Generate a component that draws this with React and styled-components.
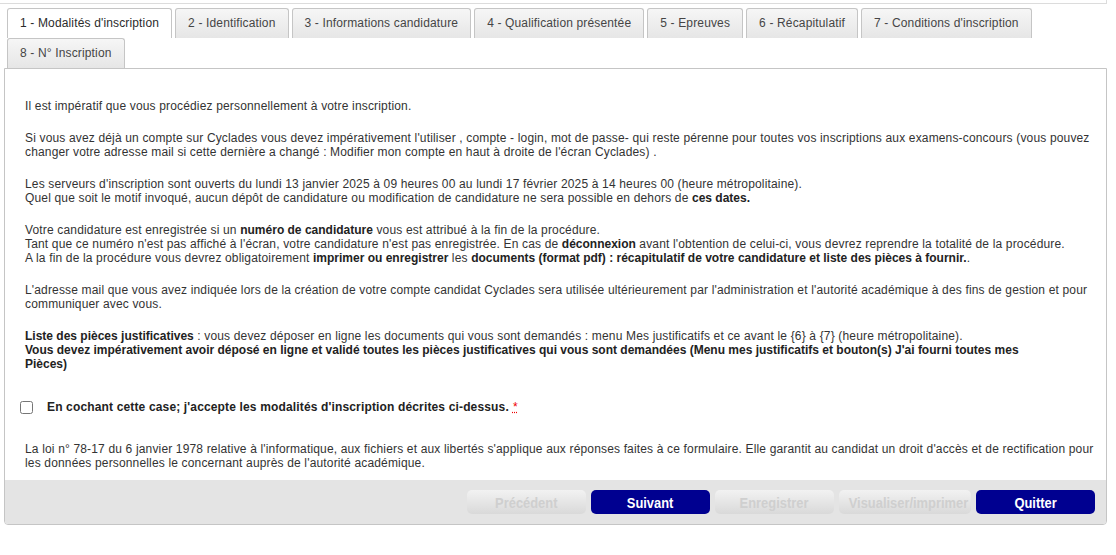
import React, { useState } from "react";
import styled, { createGlobalStyle } from "styled-components";

const tabs = [
  "1 - Modalités d'inscription",
  "2 - Identification",
  "3 - Informations candidature",
  "4 - Qualification présentée",
  "5 - Epreuves",
  "6 - Récapitulatif",
  "7 - Conditions d'inscription",
  "8 - N° Inscription",
];

const buttons = [
  { label: "Précédent", disabled: true },
  { label: "Suivant" },
  { label: "Enregistrer", disabled: true },
  { label: "Visualiser/imprimer", disabled: true, wide: true },
  { label: "Quitter" },
];

const App = () => {
  const [active, setActive] = useState(0);
  const [accepted, setAccepted] = useState(false);

  return (
    <Page>
      <GlobalStyle />
      <TopBox />
      <Wrapper>
        <TabList>
          {tabs.map((t, i) => (
            <Tab key={i} $active={active === i} onClick={() => setActive(i)}>
              {t}
            </Tab>
          ))}
        </TabList>
        <Panel>
          <Content>
            <Para>Il est impératif que vous procédiez personnellement à votre inscription.</Para>
            <Para>
              Si vous avez déjà un compte sur Cyclades vous devez impérativement l'utiliser , compte - login, mot de
              passe- qui reste pérenne pour toutes vos inscriptions aux examens-concours (vous pouvez changer votre
              adresse mail si cette dernière a changé : Modifier mon compte en haut à droite de l'écran Cyclades) .
            </Para>
            <Para>
              Les serveurs d'inscription sont ouverts du lundi 13 janvier 2025 à 09 heures 00 au lundi 17 février 2025 à
              14 heures 00 (heure métropolitaine).
              <br />
              Quel que soit le motif invoqué, aucun dépôt de candidature ou modification de candidature ne sera possible
              en dehors de <b>ces dates.</b>
            </Para>
            <Para>
              Votre candidature est enregistrée si un <b>numéro de candidature</b> vous est attribué à la fin de la
              procédure.
              <br />
              Tant que ce numéro n'est pas affiché à l'écran, votre candidature n'est pas enregistrée. En cas de{" "}
              <b>déconnexion</b> avant l'obtention de celui-ci, vous devrez reprendre la totalité de la procédure.
              <br />A la fin de la procédure vous devrez obligatoirement <b>imprimer ou enregistrer</b> les{" "}
              <b>documents (format pdf) : récapitulatif de votre candidature et liste des pièces à fournir.</b>.
            </Para>
            <Para>
              L'adresse mail que vous avez indiquée lors de la création de votre compte candidat Cyclades sera utilisée
              ultérieurement par l'administration et l'autorité académique à des fins de gestion et pour communiquer
              avec vous.
            </Para>
            <Para>
              <b>Liste des pièces justificatives</b> : vous devez déposer en ligne les documents qui vous sont demandés :
              menu Mes justificatifs et ce avant le {"{6}"} à {"{7}"} (heure métropolitaine).
              <br />
              <b>
                Vous devez impérativement avoir déposé en ligne et validé toutes les pièces justificatives qui vous sont
                demandées (Menu mes justificatifs et bouton(s) J'ai fourni toutes mes
                <br />
                Pièces)
              </b>
            </Para>
            <CheckRow>
              <Check type="checkbox" checked={accepted} onChange={(e) => setAccepted(e.target.checked)} />
              <CheckLabel>
                En cochant cette case; j'accepte les modalités d'inscription décrites ci-dessus.
                <Required title="obligatoire">*</Required>
              </CheckLabel>
            </CheckRow>
            <Para>
              La loi n° 78-17 du 6 janvier 1978 relative à l'informatique, aux fichiers et aux libertés s'applique aux
              réponses faites à ce formulaire. Elle garantit au candidat un droit d'accès et de rectification pour les
              données personnelles le concernant auprès de l'autorité académique.
            </Para>
          </Content>
          <Footer>
            {buttons.map((b) => (
              <ActionButton key={b.label} disabled={b.disabled} $wide={b.wide}>
                <ButtonText>{b.label}</ButtonText>
              </ActionButton>
            ))}
          </Footer>
        </Panel>
      </Wrapper>
    </Page>
  );
};

export default App;

const GlobalStyle = createGlobalStyle`
  body {
    margin: 0;
    background: #fff;
    font-family: "Liberation Sans", Arial, sans-serif;
    font-size: 12px;
    color: #333;
  }
`;

const Page = styled.div`
  width: 1116px;
`;

const TopBox = styled.div`
  width: 1106px;
  height: 3px;
  border-bottom: 1px solid #dcdcdc;
  border-right: 1px solid #dcdcdc;
`;

const Wrapper = styled.div`
  width: 1103px;
  margin: 4px 0 0 4px;
`;

const TabList = styled.ul`
  display: flex;
  flex-wrap: wrap;
  column-gap: 3px;
  list-style: none;
  margin: 0;
  padding: 0 0 0 3px;
`;

const Tab = styled.li`
  height: 30px;
  box-sizing: border-box;
  display: flex;
  align-items: center;
  padding: 0 12px 1px;
  border: 1px solid #c5c5c5;
  border-bottom: none;
  border-radius: 3px 3px 0 0;
  background: ${(p) => (p.$active ? "#fff" : "linear-gradient(#f6f6f6, #e6e6e6)")};
  color: ${(p) => (p.$active ? "#2b2b2b" : "#454545")};
  font-size: 12px;
  letter-spacing: 0.15px;
  cursor: pointer;
  white-space: nowrap;
`;

const Panel = styled.div`
  border: 1px solid #c5c5c5;
  border-radius: 0 0 4px 4px;
  overflow: hidden;
`;

const Content = styled.div`
  padding: 30px 12px 10px 20px;
`;

const Para = styled.p`
  margin: 0 0 18px;
  line-height: 14px;
  letter-spacing: 0.16px;
  &:last-child {
    margin-bottom: 0;
  }
  b {
    color: #222;
    letter-spacing: 0;
  }
`;

const CheckRow = styled.div`
  display: flex;
  align-items: center;
  margin: 29px 0 28px -5px;
`;

const Check = styled.input`
  width: 13px;
  height: 13px;
  margin: 0 14px 0 0;
`;

const CheckLabel = styled.label`
  font-weight: bold;
  font-size: 12px;
  letter-spacing: 0.15px;
  color: #222;
`;

const Required = styled.abbr`
  color: #e00;
  margin-left: 4px;
  font-weight: normal;
  text-decoration: underline dotted;
`;

const Footer = styled.div`
  display: flex;
  justify-content: flex-end;
  gap: 5px;
  padding: 10px 11px 10px;
  background: #e4e4e4;
`;

const ActionButton = styled.button`
  width: ${(p) => (p.$wide ? "132px" : "119px")};
  height: 24px;
  padding: 0;
  border: none;
  border-radius: 5px;
  overflow: visible;
  font-family: "Liberation Sans", Arial, sans-serif;
  font-weight: bold;
  font-size: 15px;
  color: #fff;
  background: #000090;
  cursor: pointer;

  &:disabled {
    color: #cfcfcf;
    background: linear-gradient(#f2f2f2, #d9d9d9);
    cursor: default;
  }
`;

const ButtonText = styled.span`
  display: inline-block;
  transform: scaleX(0.86);
  white-space: nowrap;
`;
